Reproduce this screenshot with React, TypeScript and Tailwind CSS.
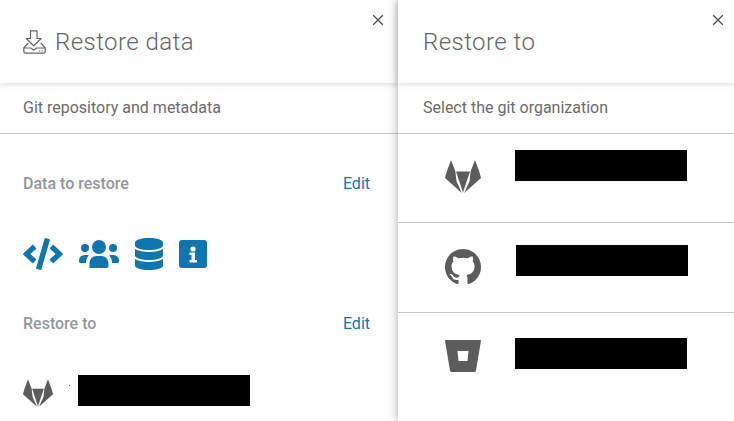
import { FaCode, FaDatabase } from "react-icons/fa";
import { X } from "lucide-react";

function GitlabIcon({ className }: { className: string }) {
  return (
    <svg viewBox="0 0 36 33" className={className} fill="#5c5c5c">
      <polygon points="6,0 10.4,11.5 11.4,21 16.8,33 0,18 1.6,12" />
      <polygon points="30,0 25.6,11.5 24.6,21 19.2,33 36,18 34.4,12" />
      <polygon points="11,11.5 25,11.5 18,32.5" />
    </svg>
  );
}

function GithubIcon({ className }: { className: string }) {
  return (
    <svg viewBox="0 0 16 16" className={className} fill="#5c5c5c">
      <path d="M8 0C3.58 0 0 3.58 0 8c0 3.54 2.29 6.53 5.47 7.59.4.07.55-.17.55-.38 0-.19-.01-.82-.01-1.49-2.01.37-2.53-.49-2.69-.94-.09-.23-.48-.94-.82-1.13-.28-.15-.68-.52-.01-.53.63-.01 1.08.58 1.23.82.72 1.21 1.87.87 2.33.66.07-.52.28-.87.51-1.07-1.78-.2-3.64-.89-3.64-3.95 0-.87.31-1.59.82-2.15-.08-.2-.36-1.02.08-2.12 0 0 .67-.21 2.2.82.64-.18 1.32-.27 2-.27.68 0 1.36.09 2 .27 1.53-1.04 2.2-.82 2.2-.82.44 1.1.16 1.92.08 2.12.51.56.82 1.27.82 2.15 0 3.07-1.87 3.75-3.65 3.95.29.25.54.73.54 1.48 0 1.07-.01 1.93-.01 2.2 0 .21.15.46.55.38A8.013 8.013 0 0016 8c0-4.42-3.58-8-8-8z" />
    </svg>
  );
}

function BitbucketIcon({ className }: { className: string }) {
  return (
    <svg viewBox="0 0 36 32" className={className}>
      <path d="M1 0h34c.7 0 1 .5.9 1.2L31 30.6c-.1.8-.6 1.4-1.5 1.4h-23c-.9 0-1.4-.6-1.5-1.4L.1 1.2C0 .5.3 0 1 0z" fill="#5c5c5c" />
      <polygon points="12.5,11 23.5,11 22.5,21 13.5,21" fill="#ffffff" />
    </svg>
  );
}

function RestoreIcon() {
  return (
    <svg viewBox="0 0 23 24" className="w-[23px] h-[24px] mr-[9px]" fill="none" stroke="#666666" strokeWidth="1.2">
      <path d="M7.5 0.8h6.5v7.7h4.2l-7.5 7.3-7.5-7.3h4.3z" strokeLinejoin="round" />
      <path d="M5.2 13 0.8 18v3.3c0 1.1.8 1.9 1.9 1.9h17.6c1.1 0 1.9-.8 1.9-1.9V18l-4.4-5" strokeLinejoin="round" />
      <path d="M0.8 18h7l2.9 2.2 2.9-2.2h8.6" strokeLinejoin="round" />
      <path d="M16 21h1.2M18.5 21h1.2" />
    </svg>
  );
}

function UsersIcon() {
  return (
    <svg viewBox="0 0 40 28" className="w-[40px] h-[28px] ml-[16px]" fill="#0f76b0">
      <circle cx="20" cy="7" r="7" />
      <circle cx="6" cy="8" r="4" />
      <circle cx="34" cy="8" r="4" />
      <path d="M10.5 28v-5a7 7 0 0 1 7-7h5a7 7 0 0 1 7 7v3a2 2 0 0 1-2 2z" />
      <path d="M0 20.5A5.5 5.5 0 0 1 5.5 15H9l.8.7C8 17.4 7 19.5 7 22.5v.5H1.5A1.5 1.5 0 0 1 0 21.5z" />
      <path d="M40 20.5a5.5 5.5 0 0 0-5.500-5.500H31l-.8.7c1.800 1.700 2.800 3.800 2.800 6.800v.5h5.500a1.500 1.500 0 0 0 1.500-1.500z" />
    </svg>
  );
}

function InfoIcon() {
  return (
    <svg viewBox="0 0 28 28" className="w-[28px] h-[28px]">
      <rect width="28" height="28" rx="3" fill="#0f76b0" />
      <circle cx="14" cy="9" r="2.6" fill="#ffffff" />
      <path d="M10.5 12.5h5.5v7.5h2v2.5h-7.5V20h2v-5h-2z" fill="#ffffff" />
    </svg>
  );
}

function PanelHeader({
  title,
  subtitle,
  icon,
  inset,
  closeClass,
}: {
  title: string;
  subtitle: string;
  icon?: boolean;
  inset: string;
  closeClass: string;
}) {
  return (
    <>
      <div className={`h-[83px] flex items-center relative z-10 bg-white shadow-[0_1px_6px_rgba(0,0,0,0.16)] ${inset}`}>
        {icon && <RestoreIcon />}
        <h1 className="text-[24px] font-light text-[#666666] tracking-[0.45px]">{title}</h1>
        <button className={`absolute top-[11px] text-[#555555] ${closeClass}`}>
          <X size={18} strokeWidth={1.8} />
        </button>
      </div>
      <div className={`h-[51px] flex items-center border-b border-[#c8c8c8] text-[16px] text-[#6b6b6b] ${inset}`}>
        {subtitle}
      </div>
    </>
  );
}

function OrgRow({ children, bar, rowClass }: { children: React.ReactNode; bar: string; rowClass: string }) {
  return (
    <div className={`flex ${rowClass}`}>
      <div className="w-[130px] flex justify-center">{children}</div>
      <div className={bar} />
    </div>
  );
}

export default function App() {
  return (
    <div className="flex w-[734px] h-[421px] overflow-hidden bg-white font-['Roboto',sans-serif]">
      <div className="w-[398px] shrink-0">
        <PanelHeader
          title="Restore data"
          subtitle="Git repository and metadata"
          icon
          inset="pl-[23px]"
          closeClass="right-[11px]"
        />

        <div className="flex justify-between items-center pl-[23px] pr-[28px] mt-[38px] text-[16px]">
          <span className="font-medium text-[#96969a]">Data to restore</span>
          <span className="text-[#0f76b0]">Edit</span>
        </div>

        <div className="flex items-center pl-[23px] mt-[42px] h-[32px] text-[#0f76b0]">
          <FaCode className="w-[40px] h-[32px]" />
          <UsersIcon />
          <FaDatabase className="w-[28px] h-[32px] ml-[16px]" />
          <div className="ml-[16px]">
            <InfoIcon />
          </div>
        </div>

        <div className="flex justify-between items-center pl-[23px] pr-[28px] mt-[42px] text-[16px]">
          <span className="font-medium text-[#96969a]">Restore to</span>
          <span className="text-[#0f76b0]">Edit</span>
        </div>

        <div className="flex items-start pl-[23px] mt-[39px]">
          <GitlabIcon className="w-[30px] h-[28px] mt-[4px]" />
          <div className="w-px h-px bg-[#555555] ml-[16px] mt-[10px]" />
          <div className="w-[172px] h-[31px] bg-black ml-[8px]" />
        </div>
      </div>

      <div className="flex-1 relative z-20 bg-white shadow-[-2px_0_8px_rgba(0,0,0,0.25)]">
        <PanelHeader title="Restore to" subtitle="Select the git organization" inset="pl-[25px]" closeClass="right-[7px]" />
        <OrgRow rowClass="h-[89px] border-b border-[#c8c8c8]" bar="w-[172px] h-[31px] bg-black mt-[16px] ml-[-13px]">
          <GitlabIcon className="w-[36px] h-[33px] mt-[26px] ml-[-1px]" />
        </OrgRow>
        <OrgRow rowClass="h-[90px] border-b border-[#c8c8c8]" bar="w-[172px] h-[31px] bg-black mt-[22px] ml-[-12px]">
          <GithubIcon className="w-[36px] h-[36px] mt-[26px] ml-[-1px]" />
        </OrgRow>
        <OrgRow rowClass="h-[90px]" bar="w-[172px] h-[31px] bg-black mt-[25px] ml-[-13px]">
          <BitbucketIcon className="w-[36px] h-[32px] mt-[27px] ml-[-1px]" />
        </OrgRow>
      </div>
    </div>
  );
}
